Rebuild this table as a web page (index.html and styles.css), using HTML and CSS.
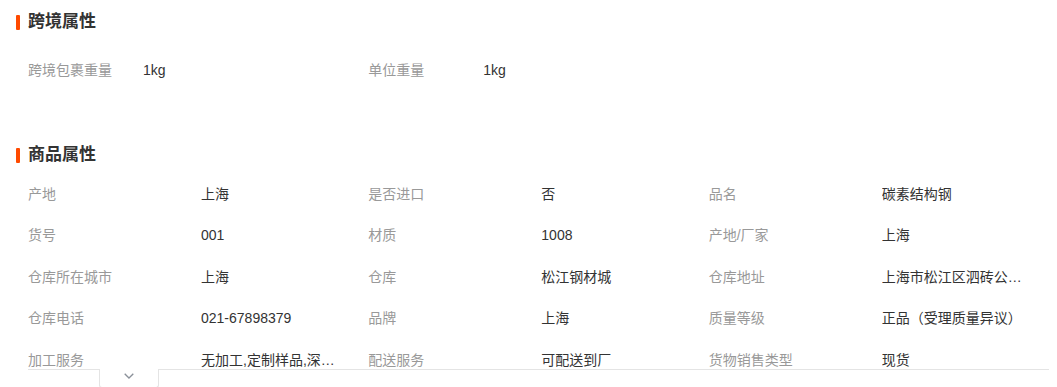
FILE: index.html
```html
<!DOCTYPE html>
<html lang="zh-CN">
<head>
<meta charset="utf-8">
<title>商品属性</title>
<link rel="stylesheet" href="styles.css">
</head>
<body>
<div class="page">
  <section class="section section-cross">
    <h2 class="section-title"><span class="title-bar"></span>跨境属性</h2>
    <div class="attr-grid attr-grid-cross">
      <div class="attr"><span class="attr-label">跨境包裹重量</span><span class="attr-value">1kg</span></div>
      <div class="attr"><span class="attr-label">单位重量</span><span class="attr-value">1kg</span></div>
    </div>
  </section>

  <section class="section section-goods">
    <h2 class="section-title"><span class="title-bar"></span>商品属性</h2>
    <div class="attr-clip">
      <div class="attr-grid attr-grid-goods">
        <div class="attr"><span class="attr-label">产地</span><span class="attr-value">上海</span></div>
        <div class="attr"><span class="attr-label">是否进口</span><span class="attr-value">否</span></div>
        <div class="attr"><span class="attr-label">品名</span><span class="attr-value">碳素结构钢</span></div>

        <div class="attr"><span class="attr-label">货号</span><span class="attr-value">001</span></div>
        <div class="attr"><span class="attr-label">材质</span><span class="attr-value">1008</span></div>
        <div class="attr"><span class="attr-label">产地/厂家</span><span class="attr-value">上海</span></div>

        <div class="attr"><span class="attr-label">仓库所在城市</span><span class="attr-value">上海</span></div>
        <div class="attr"><span class="attr-label">仓库</span><span class="attr-value">松江钢材城</span></div>
        <div class="attr"><span class="attr-label">仓库地址</span><span class="attr-value">上海市松江区泗砖公路钢材城</span></div>

        <div class="attr"><span class="attr-label">仓库电话</span><span class="attr-value">021-67898379</span></div>
        <div class="attr"><span class="attr-label">品牌</span><span class="attr-value">上海</span></div>
        <div class="attr"><span class="attr-label">质量等级</span><span class="attr-value">正品（受理质量异议）</span></div>

        <div class="attr"><span class="attr-label">加工服务</span><span class="attr-value">无加工,定制样品,深加工</span></div>
        <div class="attr"><span class="attr-label">配送服务</span><span class="attr-value">可配送到厂</span></div>
        <div class="attr"><span class="attr-label">货物销售类型</span><span class="attr-value">现货</span></div>
      </div>
    </div>
    <div class="fold-bar">
      <button class="fold-tab" type="button" aria-label="展开">
        <svg class="fold-icon" width="10" height="6" viewBox="0 0 10 6"><path d="M0.7 0.7 L5 5 L9.3 0.7" fill="none" stroke="#8a9099" stroke-width="1.3"/></svg>
      </button>
    </div>
  </section>
</div>
</body>
</html>
```

FILE: styles.css
```css
* {
  box-sizing: border-box;
}

html, body {
  margin: 0;
  padding: 0;
  background: #fff;
}

body {
  font-family: "Liberation Sans", "Noto Sans CJK SC", sans-serif;
  font-size: 14px;
  color: #333;
  overflow: hidden;
}

.page {
  padding: 10px 8px 0 16px;
}

.section-title {
  display: flex;
  align-items: center;
  gap: 8px;
  margin: 0;
  height: 24px;
  font-size: 17px;
  font-weight: bold;
  color: #333;
  line-height: 24px;
}

.title-bar {
  width: 4px;
  height: 15px;
  background: #ff4a00;
  border-radius: 1px;
}

.attr-grid {
  display: grid;
  grid-template-columns: repeat(3, 1fr);
  padding-left: 12px;
}

.attr {
  display: flex;
  align-items: center;
  min-width: 0;
  line-height: 20px;
}

.attr-label {
  flex: none;
  color: #999;
}

.attr-value {
  color: #333;
  white-space: nowrap;
  overflow: hidden;
  text-overflow: ellipsis;
}

.attr-grid-cross {
  margin-top: 26px;
}

.attr-grid-cross .attr-label {
  width: 115px;
}

.section-goods {
  margin-top: 63px;
}

.attr-clip {
  margin-top: 5.75px;
  height: 196.25px;
  overflow: hidden;
}

.attr-grid-goods {
  grid-auto-rows: 41.5px;
}

.attr-grid-goods .attr-label {
  width: 173px;
}

.attr-grid-goods .attr-value {
  width: 143px;
}

.fold-bar {
  margin-left: 12px;
  height: 20px;
  border-top: 1px solid #e4e4e4;
}

.fold-tab {
  display: flex;
  justify-content: center;
  align-items: flex-start;
  margin: -1px 0 0 71px;
  width: 60px;
  height: 19px;
  padding: 4px 0 0;
  background: #fff;
  border: 1px solid #e4e4e4;
  border-top: none;
  border-radius: 0 0 3px 3px;
  cursor: pointer;
}

.fold-icon {
  display: block;
  margin-top: 0;
}
```
